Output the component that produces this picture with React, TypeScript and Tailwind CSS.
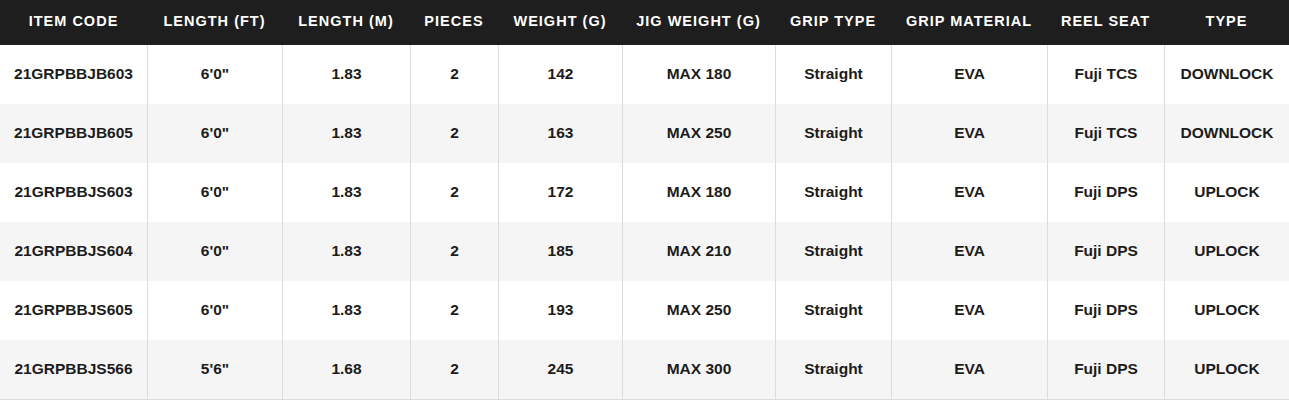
import React from "react";

const headers = [
  "ITEM CODE",
  "LENGTH (FT)",
  "LENGTH (M)",
  "PIECES",
  "WEIGHT (G)",
  "JIG WEIGHT (G)",
  "GRIP TYPE",
  "GRIP MATERIAL",
  "REEL SEAT",
  "TYPE",
];

const rows = [
  ["21GRPBBJB603", "6'0\"", "1.83", "2", "142", "MAX 180", "Straight", "EVA", "Fuji TCS", "DOWNLOCK"],
  ["21GRPBBJB605", "6'0\"", "1.83", "2", "163", "MAX 250", "Straight", "EVA", "Fuji TCS", "DOWNLOCK"],
  ["21GRPBBJS603", "6'0\"", "1.83", "2", "172", "MAX 180", "Straight", "EVA", "Fuji DPS", "UPLOCK"],
  ["21GRPBBJS604", "6'0\"", "1.83", "2", "185", "MAX 210", "Straight", "EVA", "Fuji DPS", "UPLOCK"],
  ["21GRPBBJS605", "6'0\"", "1.83", "2", "193", "MAX 250", "Straight", "EVA", "Fuji DPS", "UPLOCK"],
  ["21GRPBBJS566", "5'6\"", "1.68", "2", "245", "MAX 300", "Straight", "EVA", "Fuji DPS", "UPLOCK"],
];

const grid =
  "grid grid-cols-[147px_135px_128px_88px_124px_153px_116px_156px_117px_125px]";

export default function App() {
  return (
    <div
      className="w-[1289px] bg-white"
      style={{ fontFamily: '"Liberation Sans", Arial, sans-serif' }}
    >
      <div className={`${grid} h-[45px] bg-[#1e1e1e]`}>
        {headers.map((h) => (
          <div
            key={h}
            className="flex items-center justify-center pb-[2px] text-[14.5px] font-bold tracking-[0.07em] text-white whitespace-nowrap"
          >
            {h}
          </div>
        ))}
      </div>
      <div className="border-b border-[#dcdcdc]">
        {rows.map((r, i) => (
          <div
            key={i}
            className={`${grid} h-[59px] ${i % 2 === 1 ? "bg-[#f5f5f5]" : "bg-white"}`}
          >
            {r.map((c, j) => (
              <div
                key={j}
                className={`flex items-center justify-center pb-[2px] text-[15.5px] font-bold text-[#1c1c1c] whitespace-nowrap ${
                  j > 0 ? "border-l border-[#dcdcdc]" : ""
                }`}
              >
                {c}
              </div>
            ))}
          </div>
        ))}
      </div>
    </div>
  );
}
